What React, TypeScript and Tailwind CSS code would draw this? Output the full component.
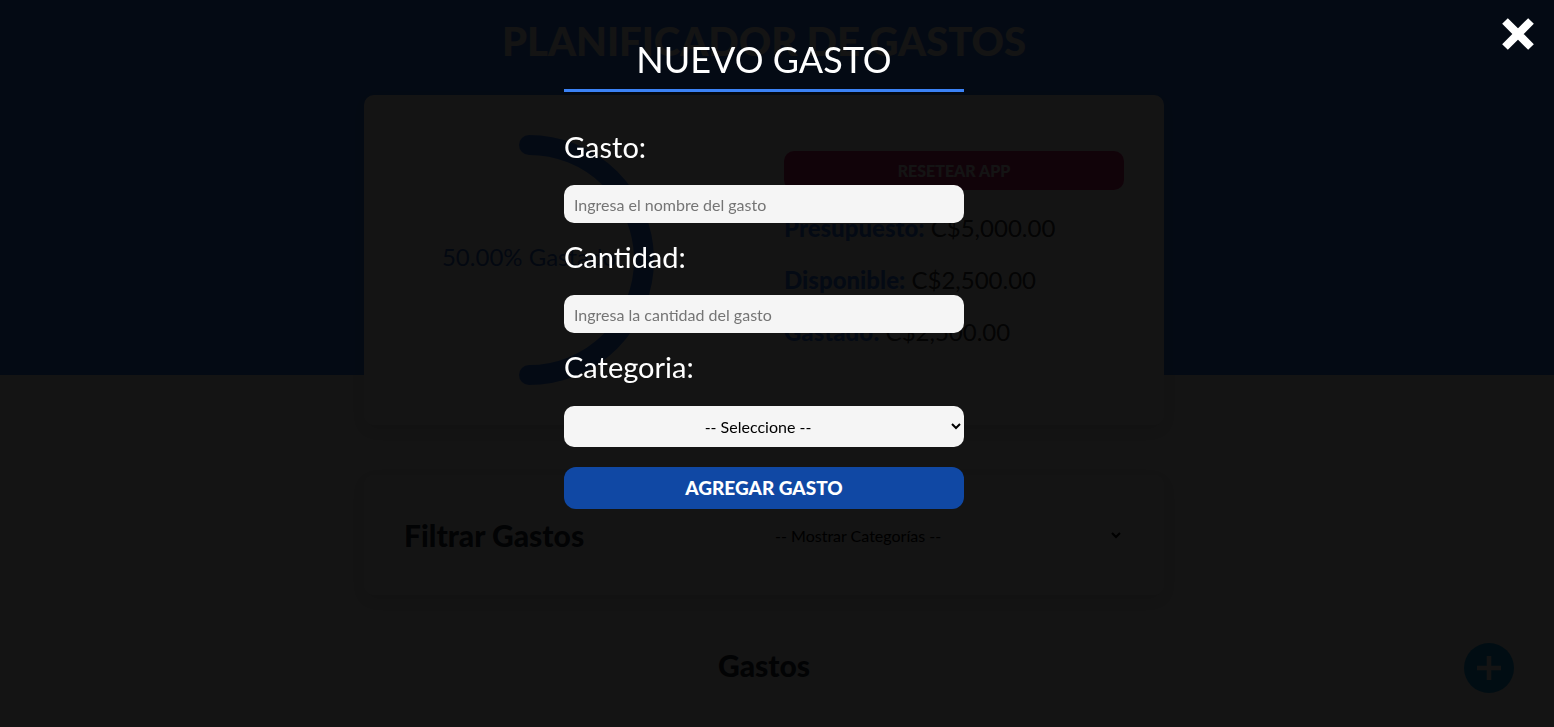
import React from 'react';

const font = "font-['Lato','Noto_Sans',sans-serif]";

const Progress: React.FC = () => (
  <svg width="250" height="250" viewBox="0 0 100 100" className="block">
    <circle cx="50" cy="50" r="46" fill="none" stroke="#f5f5f5" strokeWidth="8" />
    <path
      d="M50 4 A46 46 0 0 1 50 96"
      fill="none"
      stroke="#3b82f6"
      strokeWidth="8"
      strokeLinecap="round"
    />
    <text x="50" y="48.6" textAnchor="middle" dominantBaseline="central" fill="#2f6bd0" fontSize="9.6" fontFamily="Lato, sans-serif">
      50.00% Gastado
    </text>
  </svg>
);

const Field: React.FC<{ id: string; label: string; children: React.ReactNode }> = ({ id, label, children }) => (
  <div className="flex flex-col gap-[20px]">
    <label htmlFor={id} className="text-[29px] leading-[36px] text-white">
      {label}
    </label>
    {children}
  </div>
);

const App: React.FC = () => {
  return (
    <div className={`${font} min-h-screen bg-[#f5f5f5] pr-[26px]`}>
      {/* Header */}
      <header className="-mr-[26px] h-[375px] bg-[#3b82f6] pt-[17px] pr-[26px]">
        <h1 className="mb-[30px] text-center text-[40px] leading-[48px] font-black uppercase text-white">
          Planificador de Gastos
        </h1>

        <div className="relative mx-auto grid w-[800px] grid-cols-2 gap-10 rounded-[10px] bg-white p-10 shadow-[0_5px_15px_rgba(0,0,0,0.1)]">
          <div>
            <Progress />
          </div>
          <div className="flex flex-col gap-[23px] pt-4">
            <button className="h-[39px] rounded-[10px] bg-[#db2777] text-[16px] font-black uppercase text-white">
              Resetear App
            </button>
            <p className="text-[24px] leading-[29px] text-[#333]">
              <span className="font-black text-[#3b82f6]">Presupuesto:</span> C$5,000.00
            </p>
            <p className="text-[24px] leading-[29px] text-[#333]">
              <span className="font-black text-[#3b82f6]">Disponible:</span> C$2,500.00
            </p>
            <p className="text-[24px] leading-[29px] text-[#333]">
              <span className="font-black text-[#3b82f6]">Gastado:</span> C$2,500.00
            </p>
          </div>
        </div>
      </header>

      {/* Filtros + listado */}
      <main className="pt-[100px]">
        <div className="mx-auto flex w-[800px] items-center gap-5 rounded-[10px] bg-white px-10 py-[41px] shadow-[0_5px_15px_rgba(0,0,0,0.1)]">
          <label className="text-[30px] leading-[36px] font-black text-[#1f2937]">Filtrar Gastos</label>
          <select className="h-[38px] flex-1 rounded-[10px] bg-[#f5f5f5] px-2 text-center text-[16px] text-black [text-align-last:center]">
            <option>-- Mostrar Categorías --</option>
          </select>
        </div>

        <h2 className="mt-[52px] text-center text-[30px] leading-[36px] font-black text-[#1f2937]">Gastos</h2>
      </main>

      <button className="fixed right-10 bottom-[34px] flex h-[50px] w-[50px] items-center justify-center rounded-full bg-[#0ea5e9]">
        <svg width="26" height="26" viewBox="0 0 26 26">
          <path d="M13 1v24M1 13h24" stroke="white" strokeWidth="4.5" />
        </svg>
      </button>

      {/* Modal */}
      <div className="fixed inset-0 z-20 bg-black/[0.92] pr-[26px]">
        <button className="absolute top-[18px] right-[20px] h-8 w-8" aria-label="Cerrar">
          <svg width="32" height="32" viewBox="0 0 32 32">
            <path d="M3 3L29 29M29 3L3 29" stroke="white" strokeWidth="8" />
          </svg>
        </button>

        <form className="mx-auto w-[400px] pt-[38px]">
          <legend className="mb-[37px] block w-full border-b-[3px] border-[#3b82f6] pb-[8px] text-center text-[36px] leading-[43px] text-white uppercase">
            Nuevo Gasto
          </legend>

          <div className="flex flex-col gap-[16px]">
            <Field id="nombre" label="Gasto:">
              <input
                id="nombre"
                type="text"
                placeholder="Ingresa el nombre del gasto"
                className="h-[38px] rounded-[10px] bg-[#f5f5f5] px-[10px] text-[16px] text-black placeholder:text-[#757575] outline-none"
              />
            </Field>
            <Field id="cantidad" label="Cantidad:">
              <input
                id="cantidad"
                type="number"
                placeholder="Ingresa la cantidad del gasto"
                className="h-[38px] rounded-[10px] bg-[#f5f5f5] px-[10px] text-[16px] text-black placeholder:text-[#757575] outline-none"
              />
            </Field>
            <Field id="categoria" label="Categoria:">
              <select
                id="categoria"
                className="mt-px h-[41px] rounded-[10px] bg-[#f5f5f5] px-[8px] text-center text-[16px] text-black [text-align-last:center] outline-none"
              >
                <option value="">-- Seleccione --</option>
                <option value="ahorro">Ahorro</option>
                <option value="comida">Comida</option>
                <option value="casa">Casa</option>
              </select>
            </Field>
          </div>

          <button
            type="submit"
            className="mt-5 h-[42px] w-full rounded-[12px] bg-[#1048a4] text-[19px] font-black uppercase text-white"
          >
            Agregar Gasto
          </button>
        </form>
      </div>
    </div>
  );
};

export default App;
